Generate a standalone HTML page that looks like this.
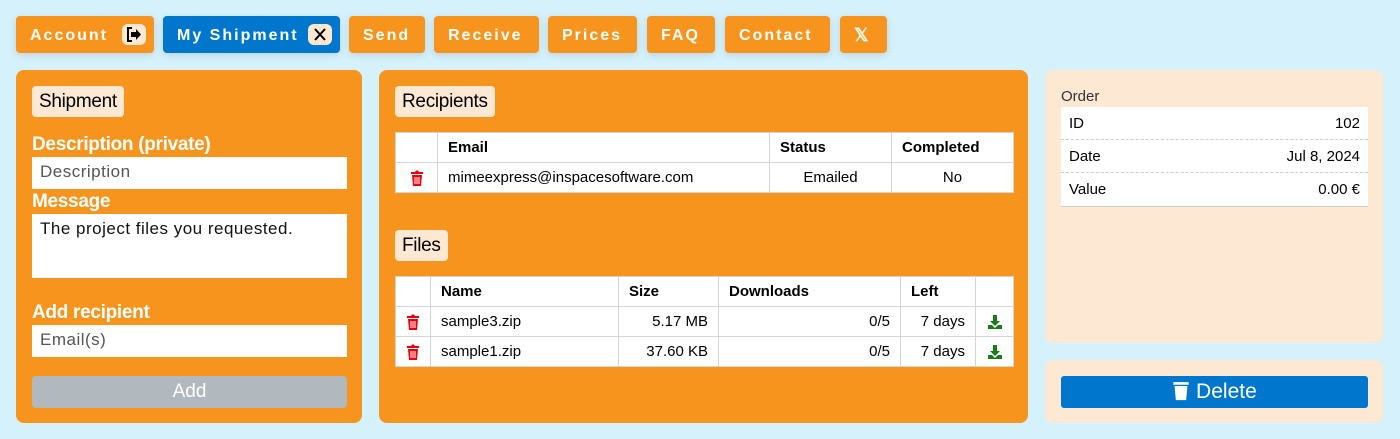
<!DOCTYPE html>
<html><head><meta charset="utf-8"><style>
*{box-sizing:border-box;margin:0;padding:0}
body{width:1400px;height:439px;background:#d5f1fb;font-family:"Liberation Sans",sans-serif;position:relative;overflow:hidden}
.nav{position:absolute;top:16px;height:37px;background:#f7941e;border-radius:4px;color:#fff;font-weight:bold;font-size:16px;letter-spacing:2px;line-height:39px;padding-left:14px;box-shadow:0 2px 8px rgba(0,0,0,.12)}
.nav.blue{background:#0077cc}
.ic{position:absolute;top:8px;width:24px;height:21px;background:#fde9d3;border-radius:6px}
.ic svg{position:absolute;left:4px;top:3px}
.panel{position:absolute;background:#f7941e;border-radius:8px}
.tag{position:absolute;background:#fde9d3;border-radius:4px;font-size:19px;height:31px;line-height:31px;padding:0 7px;color:#000;letter-spacing:-.3px}
.lbl{position:absolute;left:16px;color:#fff;font-weight:bold;font-size:19px;letter-spacing:-.3px}
.inp{position:absolute;left:16px;width:315px;background:#fff;font-size:17px;color:#555;padding:5px 8px;letter-spacing:.5px}
table{position:absolute;border-collapse:collapse;background:#fff;font-size:15px;table-layout:fixed}
td,th{border:1px solid #d4d4d4;height:30px;padding:0 10px;text-align:left;white-space:nowrap}
th{font-weight:bold}
.r{text-align:right}.c{text-align:center}
td svg{vertical-align:middle}
.side{position:absolute;background:#fde9d3;border-radius:8px}
.row{display:flex;justify-content:space-between;padding:0 8px;height:33px;line-height:33px;font-size:15px;border-bottom:1px dashed #ccc}
</style></head><body>
<svg width="0" height="0" style="position:absolute"><defs>
<symbol id="tr" viewBox="0 0 14 16"><path d="M1 2h4l1-1.5h2L9 2h4v2H1z M2 5h10l-1 11H3z" fill="currentColor"/><path d="M5 7v7M7 7v7M9 7v7" stroke="#fff" stroke-width="1"/></symbol>
<symbol id="dl" viewBox="0 0 16 16"><path d="M6 1h4v6h3l-5 5-5-5h3z" fill="#1b7a1b"/><path d="M1 11h4l3 3 3-3h4v4H1z" fill="#1b7a1b"/></symbol>
</defs></svg>
<div class="nav" style="left:16px;width:138px">Account<span class="ic" style="left:106px"><svg width="16" height="15" viewBox="0 0 16 15"><path d="M6 1H2v13h4" stroke="#000" stroke-width="2" fill="none"/><path d="M5 5h5V2l5 5.5-5 5.5V10H5z" fill="#000"/></svg></span></div>
<div class="nav blue" style="left:163px;width:177px">My Shipment<span class="ic" style="left:145px"><svg width="16" height="15" viewBox="0 0 16 15"><path d="M3 2l10 11M13 2L3 13" stroke="#000" stroke-width="2"/></svg></span></div>
<div class="nav" style="left:349px;width:76px">Send</div>
<div class="nav" style="left:434px;width:105px">Receive</div>
<div class="nav" style="left:548px;width:89px">Prices</div>
<div class="nav" style="left:647px;width:68px">FAQ</div>
<div class="nav" style="left:725px;width:105px">Contact</div>
<div class="nav" style="left:840px;width:47px;font-size:18px">𝕏</div>

<div class="panel" style="left:16px;top:70px;width:346px;height:353px">
 <div class="tag" style="left:16px;top:16px">Shipment</div>
 <div class="lbl" style="top:64px">Description (private)</div>
 <div class="inp" style="top:87px;height:32px">Description</div>
 <div class="lbl" style="top:121px">Message</div>
 <div class="inp" style="top:144px;height:64px;color:#111">The project files you requested.</div>
 <div class="lbl" style="top:232px">Add recipient</div>
 <div class="inp" style="top:255px;height:32px">Email(s)</div>
 <div style="position:absolute;left:16px;top:306px;width:315px;height:32px;background:#b1b9be;border-radius:4px;color:#fff;font-size:19px;text-align:center;line-height:32px">Add</div>
</div>

<div class="panel" style="left:379px;top:70px;width:649px;height:353px">
 <div class="tag" style="left:16px;top:16px">Recipients</div>
 <table style="left:16px;top:62px;width:618px">
  <tr><th style="width:42px"></th><th style="width:332px">Email</th><th style="width:122px">Status</th><th style="width:122px">Completed</th></tr>
  <tr><td class="c" style="color:#e8000b"><svg width="14" height="16"><use href="#tr"/></svg></td><td>mimeexpress@inspacesoftware.com</td><td class="c">Emailed</td><td class="c">No</td></tr>
 </table>
 <div class="tag" style="left:16px;top:160px">Files</div>
 <table style="left:16px;top:206px;width:618px">
  <tr><th style="width:35px"></th><th style="width:188px">Name</th><th style="width:100px">Size</th><th style="width:182px">Downloads</th><th style="width:75px">Left</th><th style="width:38px"></th></tr>
  <tr><td class="c" style="color:#e8000b;padding:0"><svg width="14" height="16"><use href="#tr"/></svg></td><td>sample3.zip</td><td class="r">5.17 MB</td><td class="r">0/5</td><td class="r">7 days</td><td class="c" style="padding:0"><svg width="16" height="16"><use href="#dl"/></svg></td></tr>
  <tr><td class="c" style="color:#e8000b;padding:0"><svg width="14" height="16"><use href="#tr"/></svg></td><td>sample1.zip</td><td class="r">37.60 KB</td><td class="r">0/5</td><td class="r">7 days</td><td class="c" style="padding:0"><svg width="16" height="16"><use href="#dl"/></svg></td></tr>
 </table>
</div>

<div class="side" style="left:1045px;top:70px;width:338px;height:273px">
 <div style="position:absolute;left:16px;top:18px;font-size:15px;color:#333">Order</div>
 <div style="position:absolute;left:16px;top:37px;width:307px;background:#fff;border-bottom:1px solid #ccc">
  <div class="row"><span>ID</span><span>102</span></div>
  <div class="row"><span>Date</span><span>Jul 8, 2024</span></div>
  <div class="row" style="border:none"><span>Value</span><span>0.00 €</span></div>
 </div>
</div>
<div class="side" style="left:1045px;top:360px;width:338px;height:63px">
 <div style="position:absolute;left:16px;top:16px;width:307px;height:32px;background:#0077cc;border-radius:3px;color:#fff;font-size:21px;text-align:center;line-height:32px"><svg width="18" height="21" viewBox="0 0 14 16" style="vertical-align:-3px;color:#fff"><path d="M1 1.5h12V3.5H1z M2 4.5h10l-1 11H3z" fill="#fff"/></svg> Delete</div>
</div>
</body></html>
